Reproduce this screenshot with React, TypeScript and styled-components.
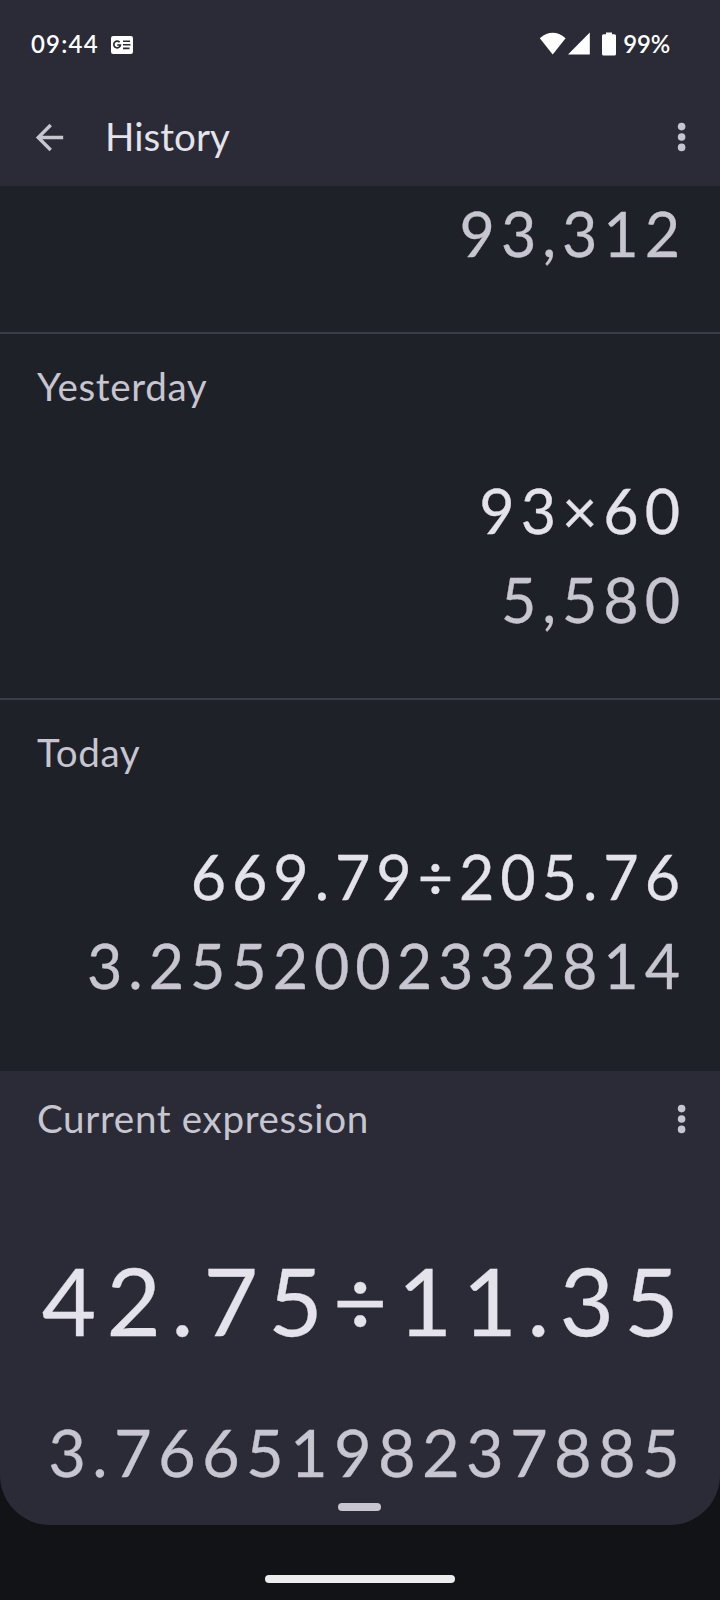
import React from "react";
import styled, { createGlobalStyle } from "styled-components";

const color = {
  surface: "#2a2b36",
  list: "#1f2129",
  base: "#121317",
  divider: "#3b3c45",
  text: "#e4e2ea",
  dim: "#c7c5d0",
};

const GlobalStyle = createGlobalStyle`
  * { box-sizing: border-box; }
  body { margin: 0; background: ${color.base}; }
`;

const Screen = styled.main`
  width: 720px;
  height: 1600px;
  display: flex;
  flex-direction: column;
  overflow: hidden;
  background: ${color.base};
  font-family: Lato, "Open Sans", sans-serif;
  color: ${color.text};
`;

const Header = styled.header`
  height: 186px;
  background: ${color.surface};
`;

const StatusBar = styled.div`
  height: 88px;
  padding: 0 50px 0 31px;
  display: flex;
  align-items: center;
  justify-content: space-between;
  color: #fff;
`;

const StatusGroup = styled.div`
  display: flex;
  align-items: center;
  svg { display: block; }
`;

const StatusText = styled.span<{ $spacing: number; $gap?: number }>`
  margin-left: ${(p) => p.$gap ?? 0}px;
  font-size: 24px;
  line-height: 30px;
  font-weight: 600;
  letter-spacing: ${(p) => p.$spacing}px;
`;

const AppBar = styled.div`
  height: 98px;
  padding-left: 28.5px;
  padding-right: 29px;
  display: flex;
  align-items: center;
  svg { display: block; }
`;

const Label = styled.h2`
  margin: 0;
  font-size: 38.6px;
  line-height: 48px;
  font-weight: 400;
  letter-spacing: 0.65px;
  color: ${color.dim};
  white-space: nowrap;
`;

const Title = styled(Label).attrs({ as: "h1" })`
  margin: 0 0 2px 35.5px;
  flex: 1;
  letter-spacing: 0.05px;
  color: ${color.text};
`;

const IconButton = styled.button<{ $drop?: number }>`
  border: 0;
  padding: 0;
  margin-top: ${(p) => p.$drop ?? 0}px;
  background: none;
  color: ${color.dim};
  display: block;
`;

const HistorySection = styled.section<{ $height: number; $divided?: boolean; $top: number }>`
  height: ${(p) => p.$height}px;
  padding: ${(p) => p.$top}px 34px 0 37px;
  background: ${color.list};
  border-bottom: ${(p) => (p.$divided ? `2px solid ${color.divider}` : "0")};
`;

const Entry = styled.div<{ $offset?: number }>`
  margin-top: ${(p) => p.$offset ?? 0}px;
  display: flex;
  flex-direction: column;
  align-items: flex-end;
`;

const Figure = styled.div<{ $dim?: boolean }>`
  font-size: 61px;
  line-height: 89px;
  letter-spacing: 5.95px;
  white-space: nowrap;
  color: ${(p) => (p.$dim ? color.dim : color.text)};
  -webkit-text-stroke: 0.3px currentColor;
`;

const CurrentPanel = styled.section`
  height: 454px;
  padding: 23px 29px 0 37px;
  border-radius: 0 0 50px 50px;
  background: ${color.surface};
  display: flex;
  flex-direction: column;
`;

const PanelHeader = styled.div`
  height: 48px;
  display: flex;
  align-items: center;
  justify-content: space-between;
`;

const CurrentFigure = styled(Figure)`
  margin: 103px 2px 0 0;
  align-self: flex-end;
  font-size: 94px;
  line-height: 110px;
  letter-spacing: 10.2px;
`;

const CurrentResult = styled(Figure)`
  margin: 57px 5px 0 0;
  align-self: flex-end;
  font-size: 65px;
  line-height: 80px;
  letter-spacing: 6.3px;
`;

const Handle = styled.div`
  width: 43px;
  height: 8px;
  margin: 11px 0 0 301px;
  border-radius: 4px;
  background: ${color.dim};
`;

const NavArea = styled.footer`
  flex: 1;
  padding-top: 50px;
  display: flex;
  justify-content: center;
`;

const NavPill = styled.div`
  width: 190px;
  height: 8px;
  border-radius: 4px;
  background: #ececec;
`;

const NewsGlyph = styled.svg`
  margin: 2px 0 0 12px;
`;

const NewsIcon = () => (
  <NewsGlyph width="22" height="18" viewBox="0 0 22 18">
    <rect width="22" height="18" rx="2.2" fill="#fff" />
    <path d="M8.6 6.3A3.3 3.3 0 1 0 9.4 9H6.2" fill="none" stroke={color.surface} strokeWidth="1.7" />
    <path d="M12 5.2h7M12 8.8h7.5M12 12.4h6.5" stroke={color.surface} strokeWidth="1.6" />
  </NewsGlyph>
);

const SignalIcons = () => (
  <svg width="78" height="26" viewBox="0 0 78 26" fill="#fff">
    <path d="M0.8 7.2Q13.7 -3.6 26.6 7.2L13.7 23.4Z" />
    <path d="M29 23.6L50.8 1.6V23.6Z" />
    <path d="M67 1.4h6v1.8h2.4q1.6 0 1.6 1.6V23q0 1.6-1.6 1.6H64.6Q63 24.6 63 23V4.8q0-1.6 1.6-1.6H67Z" />
  </svg>
);

const BackIcon = () => (
  <svg width="41" height="41" viewBox="0 0 24 24" fill="currentColor">
    <path d="M20 11H7.83l5.59-5.59L12 4l-8 8 8 8 1.41-1.41L7.83 13H20v-2z" />
  </svg>
);

const MoreIcon = () => (
  <svg width="20" height="32" viewBox="0 0 20 32" fill="currentColor">
    <circle cx="10.6" cy="5.6" r="3.8" />
    <circle cx="10.6" cy="16" r="3.8" />
    <circle cx="10.6" cy="26.4" r="3.8" />
  </svg>
);

export default function App() {
  return (
    <>
      <GlobalStyle />
      <Screen>
        <Header>
          <StatusBar>
            <StatusGroup>
              <StatusText $spacing={1.2}>09:44</StatusText>
              <NewsIcon />
            </StatusGroup>
            <StatusGroup>
              <SignalIcons />
              <StatusText $spacing={-0.2} $gap={6}>99%</StatusText>
            </StatusGroup>
          </StatusBar>
          <AppBar>
            <IconButton aria-label="Back"><BackIcon /></IconButton>
            <Title>History</Title>
            <IconButton aria-label="More options"><MoreIcon /></IconButton>
          </AppBar>
        </Header>

        <HistorySection $height={148} $top={3} $divided>
          <Entry>
            <Figure $dim>93,312</Figure>
          </Entry>
        </HistorySection>

        <HistorySection $height={366} $top={28} $divided>
          <Label>Yesterday</Label>
          <Entry $offset={56}>
            <Figure>93×60</Figure>
            <Figure $dim>5,580</Figure>
          </Entry>
        </HistorySection>

        <HistorySection $height={371} $top={28}>
          <Label>Today</Label>
          <Entry $offset={56}>
            <Figure>669.79÷205.76</Figure>
            <Figure $dim>3.2552002332814</Figure>
          </Entry>
        </HistorySection>

        <CurrentPanel>
          <PanelHeader>
            <Label>Current expression</Label>
            <IconButton aria-label="Expression options" $drop={4}><MoreIcon /></IconButton>
          </PanelHeader>
          <CurrentFigure>42.75÷11.35</CurrentFigure>
          <CurrentResult $dim>3.7665198237885</CurrentResult>
          <Handle />
        </CurrentPanel>

        <NavArea>
          <NavPill />
        </NavArea>
      </Screen>
    </>
  );
}
